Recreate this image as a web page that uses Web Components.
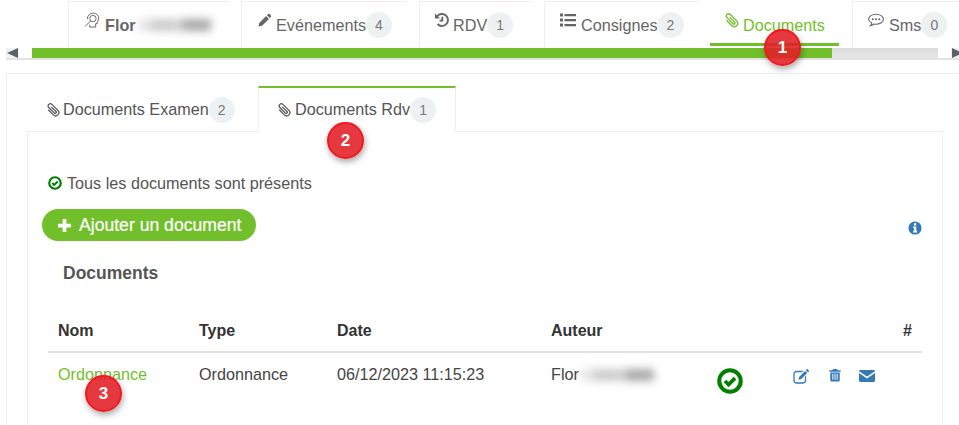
<!DOCTYPE html>
<html lang="fr">
<head>
<meta charset="utf-8">
<title>Documents</title>
<style>
  html, body { margin: 0; height: 425px; overflow: hidden; background: #fff; }
  body { font-family: "Liberation Sans", Arial, sans-serif; font-size: 16.2px; color: #555; position: relative; }
</style>
</head>
<body>
<app-page></app-page>

<script>
// icon drawings, all on a 16x16 box
const ICONS = {
  head: '<g fill="none" stroke="currentColor" stroke-width=".9"><path d="M3.2 6.6C3.2 3.2 5.6 1 8.6 1s5.2 2.2 5.2 5c0 1.700-.7 2.800-1.300 3.700v1.200h-1.500v3.300H5.400v-2.300"/><circle cx="8.400" cy="6.200" r="3"/><path d="M6.200 8.400 1 13.600"/></g>',
  pencil: '<path fill="currentColor" d="M1.500 14.500l.9-3.900 7.300-7.300 3 3-7.300 7.300zM10.600 2.400l1.300-1.300c.4-.4 1-.4 1.400 0l1.600 1.600c.4.4.4 1 0 1.400l-1.300 1.300z"/>',
  history: '<g fill="none" stroke="currentColor" stroke-width="1.900"><path d="M3.200 4.300A6 6 0 1 1 3.500 12"/><path d="M8.300 4.800v3.800H5.600"/></g><path fill="currentColor" d="M1 1.500v5h5z"/>',
  list: '<path fill="currentColor" d="M0 1.500h3v3H0zM0 6.500h3v3H0zM0 11.500h3v3H0zM4.500 2h11.500v2.200H4.500zM4.500 7h11.500v2.200H4.500zM4.500 12h11.500v2.200H4.500z"/>',
  comment: '<path fill="none" stroke="currentColor" stroke-width="1.100" d="M8 2.200c4 0 7.400 2.200 7.400 5s-3.400 5-7.400 5c-.7 0-1.300 0-2-.2-1 .8-2.200 1.500-3.600 1.700.7-.8 1.200-1.700 1.300-2.700C2 10 .6 8.700.6 7.200c0-2.800 3.400-5 7.400-5z"/><circle cx="4.800" cy="7.200" r="1" fill="currentColor"/><circle cx="8" cy="7.200" r="1" fill="currentColor"/><circle cx="11.200" cy="7.200" r="1" fill="currentColor"/>',
  clip: '<path transform="rotate(-45 8 8)" fill="none" stroke="currentColor" stroke-width="1.250" d="M4.800 4.500v7.200a3.200 3.200 0 0 0 6.400 0V3.300a2.200 2.200 0 0 0-4.400 0v7.900a1.100 1.100 0 0 0 2.200 0V4.500"/>',
  check: '<circle cx="8" cy="8" r="6.600" fill="none" stroke="currentColor" stroke-width="2.500"/><path fill="none" stroke="currentColor" stroke-width="2.300" d="M4.900 8l2.200 2.200 4-4"/>',
  plus: '<path fill="currentColor" d="M6 1h4v5h5v4h-5v5H6v-5H1V6h5z"/>',
  info: '<circle cx="8" cy="8" r="7.500" fill="currentColor"/><path fill="#fff" d="M6.800 2.700h2.600v2.300H6.800zM5.900 6.200h3.500v5h1v1.900H5.900v-1.900h1v-3.100h-1z"/>',
  edit: '<rect x="1" y="3.500" width="11.500" height="11.500" rx="2.400" fill="none" stroke="currentColor" stroke-width="1.300"/><path fill="#fff" d="M5 8.500l7-7.500 4 3.500-7.500 8-4.500 1z"/><path fill="currentColor" d="M5.500 11.700l.6-2.800 6-6 2.200 2.200-6 6zM12.800 2.200l.9-.9c.3-.3.700-.3 1 0l1.100 1.100c.3.300.3.700 0 1l-.9.9z"/>',
  trash: '<path fill="currentColor" fill-rule="evenodd" d="M5.800 1h4.400l.8 1.700H14.500v1.500h-13V2.700H5zM2.600 5h10.800v9c0 .8-.5 1.500-1.300 1.500H3.900c-.8 0-1.300-.7-1.300-1.500zM5 6.500v7h1.100v-7zM7.450 6.500v7h1.100v-7zM9.900 6.500v7H11v-7z"/>',
  mail: '<path fill="currentColor" d="M1.400 2h13.200c.8 0 1.400.6 1.400 1.200L8 8.600 0 3.200C0 2.600.6 2 1.400 2zM0 5l8 5.400L16 5v7.600c0 .8-.6 1.400-1.400 1.400H1.400C.6 14 0 13.400 0 12.600z"/>'
};

class AppIcon extends HTMLElement {
  connectedCallback() {
    const size = this.getAttribute('size') || 16;
    this.attachShadow({ mode: 'open' }).innerHTML = `
      <style>:host { display: inline-flex; flex: none; } svg { display: block; }</style>
      <svg width="${size}" height="${size}" viewBox="0 0 16 16">${ICONS[this.getAttribute('name')]}</svg>`;
  }
}

class AppCount extends HTMLElement {
  constructor() {
    super();
    this.attachShadow({ mode: 'open' }).innerHTML = `
      <style>
        :host { display: inline-flex; flex: none; width: 26px; height: 26px; border-radius: 50%; background: #edf1f2;
          color: #777; font-size: 14px; align-items: center; justify-content: center; }
      </style><slot></slot>`;
  }
}

// top level tab
class AppTab extends HTMLElement {
  constructor() {
    super();
    this.attachShadow({ mode: 'open' }).innerHTML = `
      <style>
        :host { display: flex; box-sizing: border-box; height: 47px; align-items: center; padding: 0 0 0 15px;
          border-top: 1px solid #eee; border-left: 1px solid #eee; color: #666; white-space: nowrap; flex: none; }
        :host([active]) { border-color: transparent; color: #72bf2c; position: relative; }
        .icon { display: flex; margin: -10px 4px 0 0; }
        .underline { display: none; }
        :host([active]) .underline { display: block; position: absolute; left: -1px; right: 1px; bottom: 2px; height: 3px; background: #72bf2c; }
      </style>
      <span class="icon"><slot name="icon"></slot></span><slot></slot><span class="underline"></span>`;
  }
}

class AppTabBar extends HTMLElement {
  constructor() {
    super();
    this.attachShadow({ mode: 'open' }).innerHTML = `
      <style>:host { display: flex; gap: 12px; height: 47px; padding: 1px 0 0 68px; overflow: hidden; }</style><slot></slot>`;
  }
}

class AppScrollbar extends HTMLElement {
  constructor() {
    super();
    this.attachShadow({ mode: 'open' }).innerHTML = `
      <style>
        :host { display: flex; height: 10px; margin: 0 -5px 0 6px; border-bottom: 2px solid #e3e3e3; background: #ddd; }
        .arrow { flex: none; width: 13px; display: flex; align-items: center; background: #f1f1f1; }
        .arrow i { border: 5px solid transparent; }
        .left i { border-right: 11px solid #5a6269; border-left: 0; margin-left: 1px; }
        .right i { border-left: 11px solid #5a6269; border-right: 0; margin-left: 1px; }
        .pad { flex: none; width: 13px; background: #fff; }
        .thumb { flex: none; width: 800px; background: #72bf2c; }
        .rest { flex: 1; background: linear-gradient(#dcdcdc, #e6e6e6); }
      </style>
      <span class="arrow left"><i></i></span><span class="pad"></span><span class="thumb"></span>
      <span class="rest"></span><span class="pad"></span><span class="arrow right"><i></i></span>`;
  }
}

// numbered red annotation, lies over the page
class AppMarker extends HTMLElement {
  constructor() {
    super();
    this.attachShadow({ mode: 'open' }).innerHTML = `
      <style>
        :host { position: absolute; left: var(--x); top: var(--y); box-sizing: border-box; width: 37px; height: 37px; border-radius: 50%;
          background: rgba(226, 28, 36, .88); border: 2px solid #f3181f; color: #fff; font: bold 17px "Liberation Sans", Arial, sans-serif;
          display: flex; align-items: center; justify-content: center; box-shadow: 1px 3px 6px rgba(0, 0, 0, .35); }
      </style><slot></slot>`;
  }
}

// blurred out person name
class AppBlurred extends HTMLElement {
  constructor() {
    super();
    this.attachShadow({ mode: 'open' }).innerHTML = `
      <style>
        :host { display: inline-block; position: relative; width: var(--w, 80px); height: 14px; vertical-align: -2px; filter: blur(4px); }
        i { position: absolute; top: 1px; height: 12px; background: #a8a8a8; }
      </style>
      <i style="left:3px;width:8px;opacity:.35"></i><i style="left:13px;width:30px;opacity:.6"></i><i style="left:45px;width:30px;opacity:1"></i>`;
  }
}

class AppInnerTab extends HTMLElement {
  constructor() {
    super();
    this.attachShadow({ mode: 'open' }).innerHTML = `
      <style>
        :host { display: flex; box-sizing: border-box; flex: none; height: 45px; align-items: center; padding: 1px 0 0 16px;
          white-space: nowrap; color: #555; border: 1px solid transparent; border-top-width: 2px; }
        :host([active]) { width: 198px; margin-bottom: -1px; height: 46px; padding-left: 17px; padding-bottom: 1px; background: #fff;
          border-color: #72bf2c #eee #fff; position: relative; }
        span { display: flex; margin-right: 3px; }
      </style>
      <span><slot name="icon"></slot></span><slot></slot>`;
  }
}

class AppButton extends HTMLElement {
  constructor() {
    super();
    this.attachShadow({ mode: 'open' }).innerHTML = `
      <style>
        :host { display: inline-flex; box-sizing: border-box; height: 32px; width: 214px; padding-left: 15px; align-items: center; gap: 7px;
          background: #72bf2c; border-radius: 16px; color: #fff; font-size: 17.6px; -webkit-text-stroke: .2px #fff; white-space: nowrap; }
      </style><slot></slot>`;
  }
}

class AppDocuments extends HTMLElement {
  constructor() {
    super();
    this.attachShadow({ mode: 'open' }).innerHTML = `
      <style>
        :host { display: block; }
        table { width: 874px; margin-left: 20px; border-collapse: collapse; table-layout: fixed; }
        th, td { padding: 0 10px; text-align: left; }
        th { height: 65px; font-size: 16px; color: #333; border-bottom: 2px solid #e2e2e2; padding-bottom: 11px; box-sizing: border-box; vertical-align: bottom; }
        td { height: 44px; color: #444; vertical-align: middle; box-sizing: border-box; }
        .name { color: #72bf2c; }
        .right { text-align: right; }
        .acts { display: flex; gap: 19px; color: #337ab7; margin-top: 2px; }
        .status { color: #008000; display: flex; margin: 12px 0 0 11px; }
        .mail { margin-left: -2px; }
      </style>
      <table>
        <colgroup><col style="width:141px"><col style="width:138px"><col style="width:214px"><col style="width:155px"><col style="width:87px"><col></colgroup>
        <thead><tr><th>Nom</th><th>Type</th><th>Date</th><th>Auteur</th><th></th><th class="right">#</th></tr></thead>
        <tbody><tr>
          <td class="name">Ordonnance</td>
          <td>Ordonnance</td>
          <td>06/12/2023 11:15:23</td>
          <td>Flor<slot name="author"></slot></td>
          <td><span class="status"><app-icon name="check" size="26"></app-icon></span></td>
          <td><span class="acts"><app-icon name="edit" size="16"></app-icon><app-icon name="trash" size="14"></app-icon><app-icon class="mail" name="mail" size="16"></app-icon></span></td>
        </tr></tbody>
      </table>`;
  }
}

class AppPage extends HTMLElement {
  constructor() {
    super();
    this.attachShadow({ mode: 'open' }).innerHTML = `
      <style>
        :host { display: block; width: 959px; }
        .panel { margin: 13px -10px 0 6px; border: 1px solid #eee; border-width: 1px 0 0 1px; padding: 12px 0 0 20px; height: 352px; box-sizing: border-box; }
        .inner-tabs { display: flex; padding-left: 1px; }
        .box { width: 916px; box-sizing: border-box; height: 294px; border: 1px solid #eee; border-bottom: 0; }
        .status { display: flex; align-items: center; gap: 5px; margin: 42px 0 0 20px; color: #555; height: 18px; }
        .status app-icon { color: #008000; }
        .tools { display: flex; align-items: center; justify-content: space-between; margin: 17px 20px 0 14px; }
        .tools > app-icon { color: #337ab7; margin-top: 6px; }
        h3 { margin: 18px 0 0 35px; font-size: 17.5px; line-height: 28px; color: #555; }
      </style>

      <app-tab-bar>
        <app-tab style="width:161px"><app-icon slot="icon" name="head" size="17"></app-icon><b>Flor</b><app-blurred style="--w:80px"></app-blurred></app-tab>
        <app-tab style="width:166px"><app-icon slot="icon" name="pencil" size="15"></app-icon>Evénements<app-count>4</app-count></app-tab>
        <app-tab style="width:113px;padding-left:14px"><app-icon slot="icon" name="history" size="16" style="margin-right:-1px"></app-icon>RDV<app-count>1</app-count></app-tab>
        <app-tab style="width:154px"><app-icon slot="icon" name="list" size="16" style="margin-right:1px"></app-icon>Consignes<app-count>2</app-count></app-tab>
        <app-tab active style="width:130px;padding-left:12px"><app-icon slot="icon" name="clip" size="17" style="margin-right:-1px"></app-icon>Documents</app-tab>
        <app-tab style="width:120px"><app-icon slot="icon" name="comment" size="16" style="margin-right:1px"></app-icon>Sms<app-count>0</app-count></app-tab>
      </app-tab-bar>
      <app-scrollbar></app-scrollbar>

      <div class="panel">
        <div class="inner-tabs">
          <app-inner-tab style="width:230px"><app-icon slot="icon" name="clip" size="16" style="margin-right:-1px"></app-icon>Documents Examen<app-count>2</app-count></app-inner-tab>
          <app-inner-tab active><app-icon slot="icon" name="clip" size="16"></app-icon>Documents Rdv<app-count>1</app-count></app-inner-tab>
        </div>
        <div class="box">
          <div class="status"><app-icon name="check" size="14"></app-icon>Tous les documents sont présents</div>
          <div class="tools">
            <app-button><app-icon name="plus" size="15"></app-icon>Ajouter un document</app-button>
            <app-icon name="info" size="14"></app-icon>
          </div>
          <h3>Documents</h3>
          <app-documents><app-blurred slot="author" style="--w:80px"></app-blurred></app-documents>
        </div>
      </div>

      <app-marker style="--x:764px;--y:29px">1</app-marker>
      <app-marker style="--x:327px;--y:122px">2</app-marker>
      <app-marker style="--x:85px;--y:375px">3</app-marker>`;
  }
}

customElements.define('app-icon', AppIcon);
customElements.define('app-count', AppCount);
customElements.define('app-tab', AppTab);
customElements.define('app-tab-bar', AppTabBar);
customElements.define('app-scrollbar', AppScrollbar);
customElements.define('app-marker', AppMarker);
customElements.define('app-blurred', AppBlurred);
customElements.define('app-inner-tab', AppInnerTab);
customElements.define('app-button', AppButton);
customElements.define('app-documents', AppDocuments);
customElements.define('app-page', AppPage);
</script>
</body>
</html>
